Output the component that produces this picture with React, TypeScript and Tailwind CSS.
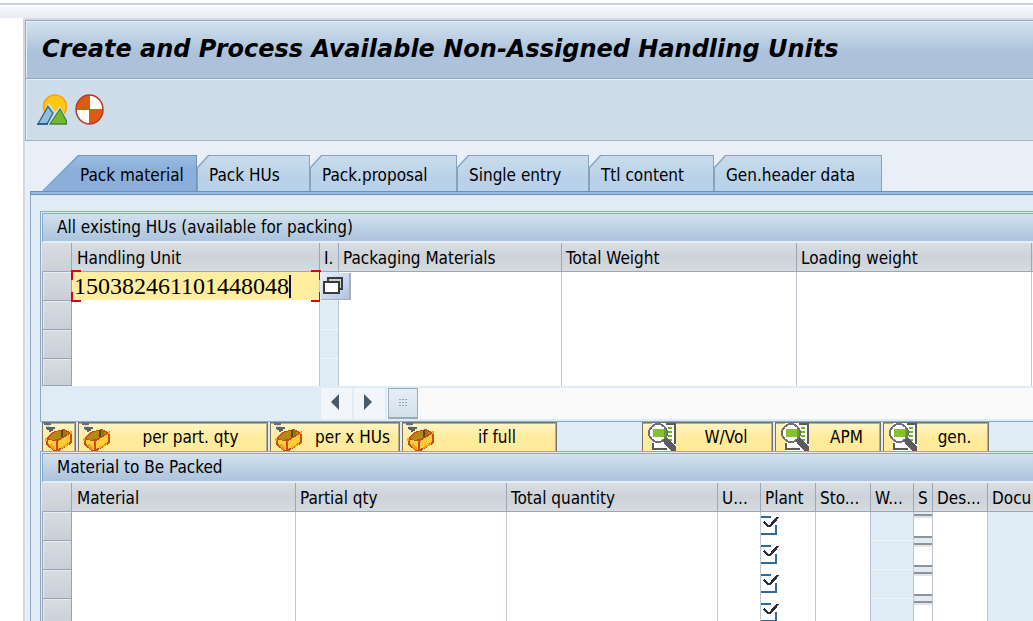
import React from "react";
import clsx from "clsx";

const tabs = [
  { label: "Pack HUs", width: "w-[113px]" },
  { label: "Pack.proposal", width: "w-[147px]" },
  { label: "Single entry", width: "w-[132px]" },
  { label: "Ttl content", width: "w-[125px]" },
  { label: "Gen.header data", width: "w-[168px]" },
];

const unitColumns = [
  { label: "Handling Unit", width: "w-[248px]" },
  { label: "I.", width: "w-[19px]" },
  { label: "Packaging Materials", width: "w-[223px]" },
  { label: "Total Weight", width: "w-[235px]" },
  { label: "Loading weight", width: "w-[235px]" },
  { label: "", width: "" },
];

const materialColumns = [
  { label: "Material", width: "w-[224px]" },
  { label: "Partial qty", width: "w-[211px]" },
  { label: "Total quantity", width: "w-[211px]" },
  { label: "U...", width: "w-[43px]" },
  { label: "Plant", width: "w-[55px]" },
  { label: "Sto...", width: "w-[55px]" },
  { label: "W...", width: "w-[43px]" },
  { label: "S", width: "w-[19px]" },
  { label: "Des...", width: "w-[55px]" },
  { label: "Docu", width: "" },
];

function OverviewIcon() {
  return (
    <svg width="30" height="31" viewBox="0 0 30 31" aria-hidden="true">
      <circle cx="18" cy="12.500" r="11.500" fill="#ffc614" stroke="#f5a01c" strokeWidth="1.500" />
      <path d="M2 29 L12 9 L18 18 L23 12 L30 25 V31 H2 Z" fill="#d3dfe8" />
      <path d="M1 30 L11 12.500 L16 19 L10 30 Z" fill="#95bcdd" stroke="#1f6897" strokeWidth="1.300" />
      <path d="M0 30 H11" stroke="#15618f" strokeWidth="1.500" />
      <path d="M13 30 L23 15 L29.500 27 V30 Z" fill="#76b82a" stroke="#3f8540" strokeWidth="1.300" />
    </svg>
  );
}

function TargetIcon() {
  return (
    <svg width="29" height="31" viewBox="0 0 29 31" aria-hidden="true">
      <ellipse cx="14.500" cy="15.500" rx="13.500" ry="14.500" fill="#dc5a14" />
      <path d="M15 15 V1.500 A13 14 0 0 1 27.500 15 Z" fill="#fff" />
      <path d="M14 16 V29.500 A13 14 0 0 1 1.500 16 Z" fill="#fff" />
      <ellipse cx="14.500" cy="15.500" rx="13.500" ry="14.500" fill="none" stroke="#b93a24" strokeWidth="1.500" />
    </svg>
  );
}

function BoxIcon() {
  return (
    <svg width="28" height="28" viewBox="0 0 28 28" shapeRendering="crispEdges" aria-hidden="true" className="shrink-0">
      <path d="M0 0 H7 V2 H0 Z" fill="#6b6b6b" />
      <path d="M2 2 H6 V5 H2 Z" fill="#d8d8dc" />
      <path d="M2 4 H11 V6 H9 V8 H7 V9 H5 V7 H3 V6 H2 Z" fill="#5f6062" />
      <path d="M2 15 L8 9 L20 6 L28 10 V20 L15 28 H10 L2 22 Z" fill="#c84a1e" />
      <path d="M4 15 L9 10 L20 7 L25 10 L14 16 L8 17 Z" fill="#b38b10" />
      <path d="M17 7 H19 V14 H17 Z" fill="#5c4708" />
      <path d="M19 7 H22 V12 H19 Z" fill="#987510" />
      <path d="M4 17 L12 18 V27 H11 L4 21 Z" fill="#ffcd38" />
      <path d="M14 18 L26 11 V19 L14 26 Z" fill="#ffcd38" />
      <path d="M5 22 L7 21 L11 25 V27 H9 Z M21 22 L25 20 V22 L17 26 V24 Z" fill="#f2a30c" />
      <path d="M1 15 H3 V18 H1 Z M26 8 H28 V11 H26 Z" fill="#f5a81b" />
    </svg>
  );
}

function InspectIcon() {
  return (
    <svg width="28" height="28" viewBox="0 0 28 28" shapeRendering="crispEdges" aria-hidden="true" className="shrink-0">
      <path d="M4 0 H28 V28 H4 Z" fill="#fff" />
      <path d="M18 0 H28 V21 H26 V2 H18 Z M4 25 H19 V27 H4 Z M4 20 H6 V27 H4 Z" fill="#5b5b5f" />
      <path d="M20 4 H24 V6 H20 Z M20 8 H24 V10 H20 Z M20 12 H24 V14 H20 Z M19 16 H24 V18 H19 Z" fill="#6db526" />
      <circle cx="10" cy="10" r="9" fill="#fff" stroke="#707074" strokeWidth="2" />
      <path d="M5 6 H16 V14 H5 Z" fill="#86c033" />
      <path d="M16 6 H18 V14 H16 Z" fill="#64a61b" />
      <path d="M15 17 L19 15 L28 24 V28 H23 L16 20 Z" fill="#5c5c60" />
    </svg>
  );
}

function CheckIcon() {
  return (
    <svg width="19" height="23" viewBox="0 0 19 23" shapeRendering="crispEdges" aria-hidden="true">
      <path d="M0 1 H10 V3 H0 Z M14 10 H16 V20 H0 V18 H14 Z" fill="#2f6a9c" />
      <path d="M3 7 L7 11 H9 L17 2" fill="none" stroke="#2b2b42" strokeWidth="2.500" />
    </svg>
  );
}

function MatchcodeIcon() {
  return (
    <svg width="22" height="18" viewBox="0 0 22 18" shapeRendering="crispEdges" aria-hidden="true">
      <path d="M6 1 H20 V12 H17 V5 H6 Z" fill="#c5d3da" stroke="#3d3a38" strokeWidth="2" />
      <path d="M2 5 H17 V16 H2 Z" fill="#fff" stroke="#3d3a38" strokeWidth="2" />
    </svg>
  );
}

function Tab({ label, width }: { label: string; width: string }) {
  return (
    <button
      role="tab"
      className={clsx(
        "h-9 shrink-0 bg-[#88a2bd] pt-px pr-px pl-px [clip-path:polygon(0_12px,11px_0,100%_0,100%_100%,0_100%)]",
        width
      )}
    >
      <span className="flex h-full items-center bg-linear-to-b from-[#cadcec] to-[#bad2e9] to-60% pt-[2px] pl-[11px] whitespace-nowrap [clip-path:polygon(0_12px,11px_0,100%_0,100%_100%,0_100%)]">
        {label}
      </span>
    </button>
  );
}

type PackButtonProps = {
  label?: string;
  width: string;
  pad: string;
  icon: React.ReactNode;
};

function PackButton({ label, width, pad, icon }: PackButtonProps) {
  return (
    <button
      aria-label={label ? undefined : "Pack"}
      className={clsx(
        "flex h-[29px] shrink-0 items-start overflow-hidden border-x border-t border-[#77736a] bg-linear-to-b from-[#fff6c8] to-[#ffeb9c] to-50% shadow-[inset_-1px_1px_0_#b9ad80]",
        width,
        pad
      )}
    >
      {icon}
      {label && <span className="flex-1 pt-1 pl-1 text-center whitespace-nowrap">{label}</span>}
    </button>
  );
}

function GroupTitle({ children }: { children: React.ReactNode }) {
  return (
    <h2 className="flex h-[30px] items-center border-t border-l border-[#86a9cc] border-b-2 border-b-[#e4eef6] bg-linear-to-b from-[#d2e1ee] to-[#abc3dc] pb-px pl-[14px]">
      {children}
    </h2>
  );
}

function HeadRow({ columns }: { columns: { label: string; width: string }[] }) {
  return (
    <thead>
      <tr className="h-[29px]">
        <th className="w-[30px] border-r border-b border-[#9aa7b6] bg-linear-to-b from-[#dadde2] to-[#cbd0d7]" />
        {columns.map((column, i) => (
          <th
            key={i}
            scope="col"
            className={clsx(
              "border-b border-[#9aa7b6] bg-linear-to-b from-[#dadfe4] via-[#cdd2d9] to-[#d6dbdf] p-0 pt-[2px] text-left font-normal whitespace-nowrap",
              i === 0 ? "pl-[5px]" : "pl-1",
              i < columns.length - 1 && "border-r",
              column.width
            )}
          >
            {column.label}
          </th>
        ))}
      </tr>
    </thead>
  );
}

function SelectorCell() {
  return (
    <td className="border-r border-b border-l border-[#97a3b3] bg-linear-to-b from-[#d8dce2] to-[#c9cfd8] p-0 shadow-[inset_1px_1px_0_#e8ebef]" />
  );
}

function HandlingUnitField() {
  return (
    <div className="relative flex h-7 items-center bg-[#ffee9f]">
      <input
        aria-label="Handling Unit"
        defaultValue="150382461101448048"
        className="field-sizing-content pl-[2px] font-['Liberation_Serif',serif] text-2xl leading-7 outline-none"
      />
      <span className="h-[23px] w-[2px] bg-[#101050]" />
      {/* focus corners */}
      <span className="absolute -top-[2px] -left-px size-[10px] border-t-2 border-l-2 border-[#e20010]" />
      <span className="absolute -top-[2px] -right-[2px] size-[10px] border-t-2 border-r-2 border-[#e20010]" />
      <span className="absolute -bottom-[2px] -left-px size-[10px] border-b-2 border-l-2 border-[#e20010]" />
      <span className="absolute -right-[2px] -bottom-[2px] size-[10px] border-r-2 border-b-2 border-[#e20010]" />
    </div>
  );
}

function UnitTable() {
  return (
    <table className="w-full table-fixed border-separate border-spacing-0">
      <HeadRow columns={unitColumns} />
      <tbody>
        {[0, 1, 2, 3].map((row) => (
          <tr key={row} className={row === 3 ? "h-[27px]" : "h-[29px]"}>
            <SelectorCell />
            <td className="border-r border-[#bcc6d2] bg-white p-0 align-top">
              {row === 0 && <HandlingUnitField />}
            </td>
            <td
              className={clsx(
                "relative border-r border-[#bcc6d2] bg-[#dfebf5] p-0",
                row < 3 && "border-b border-b-[#f0f3f6]"
              )}
            >
              {row === 0 && (
                <button
                  aria-label="Possible entries"
                  className="absolute top-px left-px flex h-[27px] w-[30px] items-center border-r-2 border-b border-[#a9adb8] bg-linear-to-br from-[#e9effa] to-[#b1c3e4] pl-px"
                >
                  <MatchcodeIcon />
                </button>
              )}
            </td>
            <td className="border-r border-[#bcc6d2] bg-white p-0" />
            <td className="border-r border-[#bcc6d2] bg-white p-0" />
            <td className="border-r border-[#bcc6d2] bg-white p-0" />
            <td className="bg-white p-0" />
          </tr>
        ))}
      </tbody>
    </table>
  );
}

function ScrollBar() {
  return (
    <div className="flex h-[35px] items-center pb-px pl-[279px]">
      <button aria-label="Scroll left" className="mr-[2px] flex h-[31px] w-[31px] items-center justify-center bg-[#f2f6fb] pr-1 pb-[2px]">
        <svg width="8" height="16" viewBox="0 0 8 16" aria-hidden="true">
          <path d="M8 0 V16 L0 8 Z" fill="#4a5b68" />
        </svg>
      </button>
      <button aria-label="Scroll right" className="mr-[2px] flex h-[31px] w-[31px] items-center justify-center bg-[#f2f6fb] pr-1 pb-[2px]">
        <svg width="8" height="16" viewBox="0 0 8 16" aria-hidden="true">
          <path d="M0 0 V16 L8 8 Z" fill="#4a5b68" />
        </svg>
      </button>
      <div className="h-[31px] flex-1 bg-[#fafafa] pl-px">
        <button
          aria-label="Scroll thumb"
          className="flex h-[31px] w-[30px] items-center justify-center border border-b-2 border-[#9cabbb] bg-linear-to-b from-[#e6eef6] to-[#d3e0eb]"
        >
          <svg width="8" height="7" viewBox="0 0 8 7" shapeRendering="crispEdges" aria-hidden="true">
            <path
              d="M0 0h2v1h-2z M3 0h2v1h-2z M6 0h2v1h-2z M0 3h2v1h-2z M3 3h2v1h-2z M6 3h2v1h-2z M0 6h2v1h-2z M3 6h2v1h-2z M6 6h2v1h-2z"
              fill="#9aa6b4"
            />
          </svg>
        </button>
      </div>
    </div>
  );
}

function MaterialTable() {
  const line = "border-r border-[#bcc6d2] p-0";
  return (
    <table className="w-full table-fixed border-separate border-spacing-0">
      <HeadRow columns={materialColumns} />
      <tbody>
        {[0, 1, 2, 3].map((row) => (
          <tr key={row} className="h-[29px]">
            <SelectorCell />
            <td className={clsx(line, "bg-white")} />
            <td className={clsx(line, "bg-white")} />
            <td className={clsx(line, "bg-white")} />
            <td className={clsx(line, "bg-white")} />
            <td className={clsx(line, "bg-white")}>
              <CheckIcon />
            </td>
            <td className={clsx(line, "bg-white")} />
            <td className={clsx(line, "border-b border-b-[#f0f3f6] bg-[#dfebf5]")} />
            <td className={clsx(line, "bg-[#dfebf5] pb-px")}>
              <input
                aria-label={`S ${row + 1}`}
                className="block h-6 w-full border-y-2 border-[#8f9297] bg-white shadow-[inset_0_2px_0_#e4e4e8] outline-none"
              />
            </td>
            <td className={clsx(line, "bg-white")} />
            <td className="bg-[#dfebf5] p-0" />
          </tr>
        ))}
      </tbody>
    </table>
  );
}

export default function App() {
  return (
    <div className="h-screen overflow-hidden bg-white pt-[3px] font-['DejaVu_Sans_Condensed','DejaVu_Sans',sans-serif] text-[17px] leading-5 text-black">
      <div className="h-[2px] bg-[#ccd0de]" />
      <div className="mt-[2px] h-[11px] bg-linear-to-b from-[#f5f7fb] to-[#e9edf3]" />

      <div className="ml-[23px] min-h-full border-t-2 border-l-2 border-[#d3d8e3] bg-[#e8eff7]">
        <header className="flex h-[59px] items-center border-t border-b border-l border-[#96aabf] bg-linear-to-b from-[#d3e3ee] to-[#acc2db] to-55% pb-[2px] pl-4 shadow-[inset_1px_1px_0_#e6eff6]">
          <h1 className="font-['DejaVu_Sans',sans-serif] text-2xl leading-8 font-bold whitespace-nowrap italic">
            Create and Process Available Non-Assigned Handling Units
          </h1>
        </header>
        <div className="flex h-[62px] items-center gap-2 border-b border-l border-[#9fb2c7] bg-[#cfdde8] pl-[11px] shadow-[inset_1px_1px_0_#e6eff6]">
          <button aria-label="Overview">
            <OverviewIcon />
          </button>
          <button aria-label="Pack">
            <TargetIcon />
          </button>
        </div>

        {/* Tab strip */}
        <div role="tablist" className="mt-[14px] flex pl-[17px]">
          <button
            role="tab"
            aria-selected="true"
            className="h-9 w-[155px] shrink-0 bg-[#7295bd] pt-px pr-px pl-px [clip-path:polygon(0_100%,36px_0,100%_0,100%_100%)]"
          >
            <span className="flex h-full items-center bg-linear-to-b from-[#9bbce0] to-[#8bafda] to-40% pt-[2px] pl-[37px] whitespace-nowrap [clip-path:polygon(0_100%,36px_0,100%_0,100%_100%)]">
              Pack material
            </span>
          </button>
          {tabs.map((tab) => (
            <Tab key={tab.label} {...tab} />
          ))}
        </div>

        <div className="ml-[5px] h-1 border-t border-b border-l border-[#6a90bb] bg-[#9abbe2]" />
        <main className="ml-[5px] border-l border-[#86a9cc] bg-[#dfebf5] pt-4 pl-[9px]">
          <section className="border-t border-b border-l border-[#86a9cc] pt-px pl-px">
            <GroupTitle>All existing HUs (available for packing)</GroupTitle>
            <UnitTable />
            <ScrollBar />
          </section>

          <div className="flex gap-[2px] pl-[2px]">
            <PackButton width="w-[34px]" pad="pl-px" icon={<BoxIcon />} />
            <PackButton label="per part. qty" width="w-[190px]" pad="pl-[3px]" icon={<BoxIcon />} />
            <PackButton label="per x HUs" width="w-[130px]" pad="pl-[3px]" icon={<BoxIcon />} />
            <PackButton label="if full" width="w-[155px]" pad="pl-[3px]" icon={<BoxIcon />} />
            <div className="w-[81px] shrink-0" />
            <PackButton label="W/Vol" width="w-[131px]" pad="pl-[5px]" icon={<InspectIcon />} />
            <PackButton label="APM" width="w-[106px]" pad="pl-[5px]" icon={<InspectIcon />} />
            <PackButton label="gen." width="w-[106px]" pad="pl-[5px]" icon={<InspectIcon />} />
          </div>

          <section className="border-t border-l border-[#86a9cc] pt-px pl-px">
            <GroupTitle>Material to Be Packed</GroupTitle>
            <MaterialTable />
          </section>
        </main>
      </div>
    </div>
  );
}
